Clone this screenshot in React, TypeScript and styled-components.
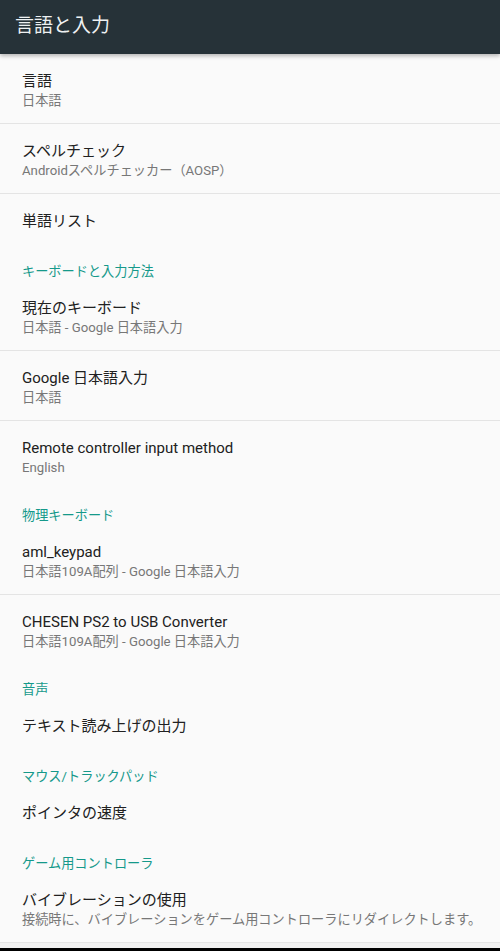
import styled, { createGlobalStyle } from 'styled-components'

const GlobalStyle = createGlobalStyle`
  html, body {
    margin: 0;
    padding: 0;
    background: #fafafa;
  }
  body {
    font-family: Roboto, "Noto Sans CJK JP", "Noto Sans", sans-serif;
    -webkit-font-smoothing: antialiased;
  }
`

type Entry =
  | { kind: 'category'; label: string }
  | { kind: 'item'; title: string; summary?: string; divider?: boolean }

const entries: Entry[] = [
  { kind: 'item', title: '言語', summary: '日本語', divider: true },
  { kind: 'item', title: 'スペルチェック', summary: 'Androidスペルチェッカー（AOSP）', divider: true },
  { kind: 'item', title: '単語リスト' },
  { kind: 'category', label: 'キーボードと入力方法' },
  { kind: 'item', title: '現在のキーボード', summary: '日本語 - Google 日本語入力', divider: true },
  { kind: 'item', title: 'Google 日本語入力', summary: '日本語', divider: true },
  { kind: 'item', title: 'Remote controller input method', summary: 'English' },
  { kind: 'category', label: '物理キーボード' },
  { kind: 'item', title: 'aml_keypad', summary: '日本語109A配列 - Google 日本語入力', divider: true },
  { kind: 'item', title: 'CHESEN PS2 to USB Converter', summary: '日本語109A配列 - Google 日本語入力' },
  { kind: 'category', label: '音声' },
  { kind: 'item', title: 'テキスト読み上げの出力' },
  { kind: 'category', label: 'マウス/トラックパッド' },
  { kind: 'item', title: 'ポインタの速度' },
  { kind: 'category', label: 'ゲーム用コントローラ' },
  {
    kind: 'item',
    title: 'バイブレーションの使用',
    summary: '接続時に、バイブレーションをゲーム用コントローラにリダイレクトします。',
    divider: true,
  },
]

function App() {
  return (
    <>
      <GlobalStyle />
      <Screen>
        <ActionBar>
          <ActionTitle>言語と入力</ActionTitle>
        </ActionBar>
        <PrefList>
          {entries.map((e, i) =>
            e.kind === 'category' ? (
              <Category key={i}>{e.label}</Category>
            ) : (
              <Pref key={i} $twoLine={!!e.summary} $divider={!!e.divider}>
                <PrefTitle>{e.title}</PrefTitle>
                {e.summary && <PrefSummary>{e.summary}</PrefSummary>}
              </Pref>
            )
          )}
        </PrefList>
        <Filler />
        <NavStrip />
      </Screen>
    </>
  )
}

const Screen = styled.div`
  height: 951px;
  display: flex;
  flex-direction: column;
  overflow: hidden;
`

const ActionBar = styled.header`
  position: relative;
  z-index: 1;
  height: 54px;
  flex: none;
  display: flex;
  align-items: center;
  padding: 0 0 8px 15px;
  box-sizing: border-box;
  background: #263238;
  box-shadow: 0 2px 4px rgba(0, 0, 0, 0.28);
`

const ActionTitle = styled.h1`
  margin: 0;
  font-size: 19px;
  font-weight: 400;
  color: #eef1f2;
`

const PrefList = styled.div`
  display: flex;
  flex-direction: column;
  flex: none;
`

const Pref = styled.div<{ $twoLine: boolean; $divider: boolean }>`
  height: ${(p) => (p.$twoLine ? 70 : 53)}px;
  box-sizing: border-box;
  padding: 17px 16px 0 22px;
  display: flex;
  flex-direction: column;
  border-bottom: 1px solid ${(p) => (p.$divider ? '#e4e4e4' : 'transparent')};
`

const PrefTitle = styled.div`
  font-size: 15px;
  line-height: 20px;
  color: #212121;
  white-space: nowrap;
`

const PrefSummary = styled.div`
  font-size: 13.2px;
  line-height: 20px;
  color: #777777;
  white-space: nowrap;
`

const Category = styled.div`
  height: 34px;
  box-sizing: border-box;
  padding: 16px 0 0 22px;
  font-size: 13.2px;
  line-height: 18px;
  color: #15998a;
`

const Filler = styled.div`
  flex: 1;
  background: #f1f1f1;
`

const NavStrip = styled.div`
  height: 3px;
  flex: none;
  background: #000;
`

export default App
